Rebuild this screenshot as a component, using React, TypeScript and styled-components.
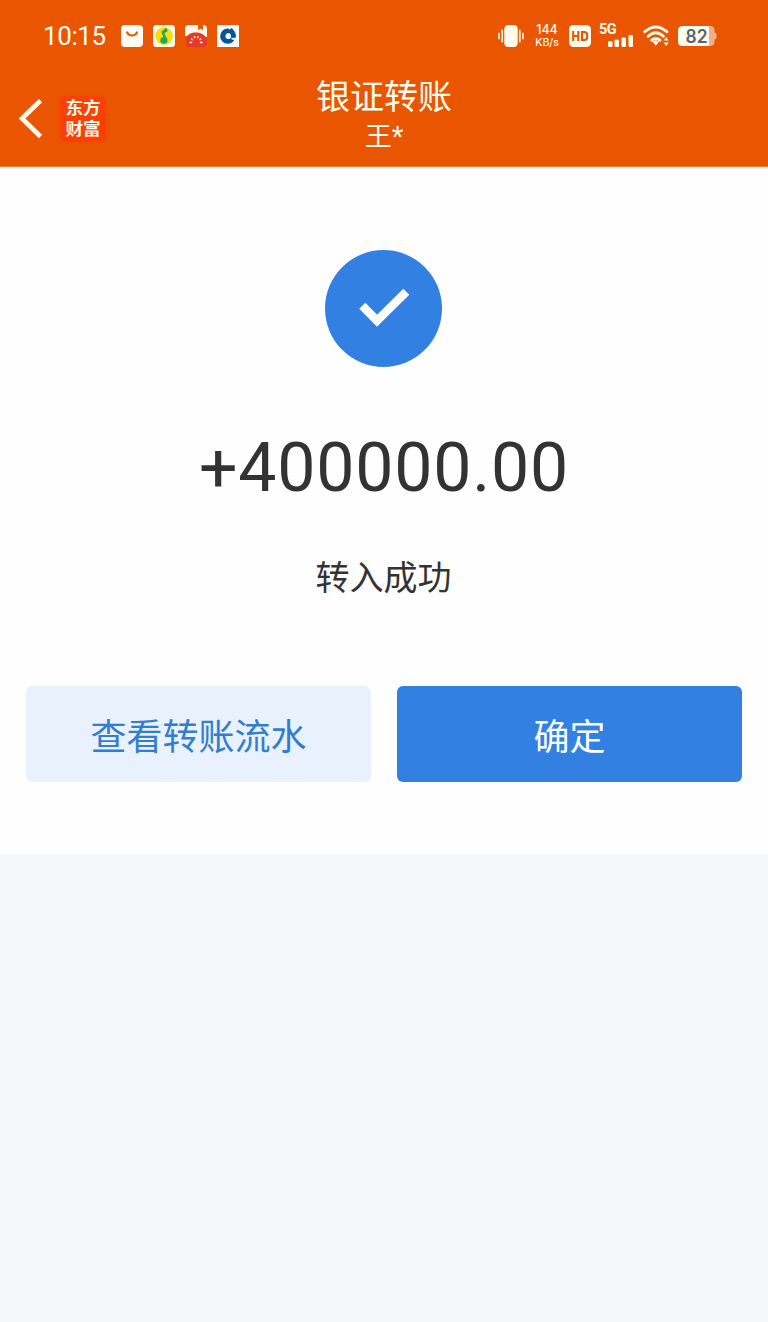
import React from 'react';
import styled, { createGlobalStyle } from 'styled-components';

const GlobalStyle = createGlobalStyle`
  * { box-sizing: border-box; }
  body {
    margin: 0;
    background: #f5f7f9;
    font-family: Roboto, "Noto Sans CJK SC", sans-serif;
  }
`;

const Page = styled.div`
  min-height: 1322px;
  background: #f5f7fa;
`;

const Header = styled.header`
  height: 167px;
  background: #e95500;
  border-bottom: 1px solid #ed7838;
  color: #fffdf0;
`;

const StatusBar = styled.div`
  display: flex;
  align-items: center;
  justify-content: space-between;
  height: 72px;
  padding: 0 51px 0 43px;
`;

const StatusGroup = styled.div<{ $gap: number }>`
  display: flex;
  align-items: center;
  gap: ${(p) => p.$gap}px;
`;

const Clock = styled.span`
  width: 68px;
  font-size: 26px;
  line-height: 32px;
  letter-spacing: -0.4px;
`;

const Speed = styled.div`
  width: 26px;
  margin: 0 9px;
  font-family: Inter, sans-serif;
  font-size: 10.5px;
  font-weight: 500;
  line-height: 13px;
  text-align: center;
  white-space: nowrap;
`;

const SpeedValue = styled.div`
  font-size: 12.5px;
  line-height: 12px;
`;

const Icon = styled.svg<{ $right?: number }>`
  display: block;
  flex: none;
  margin-right: ${(p) => p.$right ?? 0}px;
`;

const NavBar = styled.nav`
  display: grid;
  grid-template-columns: 200px 1fr 200px;
  height: 94px;
`;

const NavLeft = styled.div`
  display: flex;
  align-items: center;
  padding-left: 18px;
  gap: 16px;
`;

const Brand = styled.div`
  display: flex;
  flex-direction: column;
  align-items: center;
  justify-content: center;
  width: 46px;
  height: 46px;
  border-radius: 6px;
  background: #fc4003;
  box-shadow: 0 0 3px #f54a02;
  color: #fff4e8;
  font-size: 17.6px;
  font-weight: 700;
  line-height: 21px;
  white-space: nowrap;
`;

const TitleBlock = styled.div`
  display: flex;
  flex-direction: column;
  align-items: center;
  padding-top: 2px;
`;

const Title = styled.h1`
  margin: 0;
  font-size: 34px;
  font-weight: 400;
  line-height: 46px;
`;

const Subtitle = styled.div`
  font-size: 27px;
  line-height: 35px;
`;

const Result = styled.main`
  display: flex;
  flex-direction: column;
  align-items: center;
  height: 687px;
  padding: 83px 26px 0;
  background: #fefefe;
  color: #333;
`;

const Amount = styled.div`
  margin-top: 61px;
  font-size: 68px;
  line-height: 80px;
  letter-spacing: 0.8px;
`;

const Message = styled.div`
  margin-top: 45px;
  padding-right: 1px;
  font-size: 34px;
  line-height: 50px;
`;

const Actions = styled.div`
  display: grid;
  grid-template-columns: 1fr 1fr;
  gap: 26px;
  width: 100%;
  margin-top: 83px;
`;

const Button = styled.button<{ $primary?: boolean }>`
  height: 96px;
  padding: 0 0 1px;
  border: 0;
  border-radius: 6px;
  background: ${(p) => (p.$primary ? '#3281e2' : '#e9f2fc')};
  color: ${(p) => (p.$primary ? '#fafffe' : '#337dd0')};
  font-family: inherit;
  font-size: 36px;
`;

const BagIcon = () => (
  <Icon width="22" height="22" viewBox="0 0 22 22">
    <rect width="22" height="22" rx="4" fill="#fffdf4" />
    <path d="M6 7.3c2.2 4.3 8 4.3 10 0" fill="none" stroke="#e95500" strokeWidth="2" strokeLinecap="round" />
  </Icon>
);

const MusicIcon = () => (
  <Icon width="22" height="22" viewBox="0 0 22 22">
    <rect width="22" height="22" rx="3.5" fill="#fffde9" />
    <circle cx="11" cy="11" r="8.8" fill="#f9dc13" />
    <path d="M8.3 6.5Q11 5.8 12.8 2.6L14.8 5.8Q13.5 7.6 11.2 8l3 7h-2z" fill="#21a855" />
    <path d="M9.5 7l3.5 8" stroke="#21a855" strokeWidth="2" />
    <ellipse cx="10.9" cy="15.4" rx="3.6" ry="3.3" fill="#21a855" />
  </Icon>
);

const TomatoIcon = () => (
  <Icon width="22" height="22" viewBox="0 0 22 22">
    <path d="M0 11V4q0-4 4-4h9v5l2.5-1.5L18 5V0q4 0 4 4v8z" fill="#fff8ed" />
    <path d="M1 13C3 9 6 7.5 11 7.5S20 10 22 14v4q0 4-4 4H4q-3 0-3-4z" fill="#e43b24" />
    <path d="M5 17.500h1.500M15.500 17.500H17M6.500 14l.8.600M15.700 14l-.8.600M9.500 11.800l.2.800M12.800 11.800l-.2.800" stroke="#fff2de" strokeWidth="1.500" strokeLinecap="round" />
  </Icon>
);

const BankIcon = () => (
  <Icon width="22" height="22" viewBox="0 0 22 22">
    <rect width="22" height="22" fill="#f7fbf8" />
    <circle cx="10.8" cy="11.2" r="7.600" fill="#07549b" />
    <path d="M11.500 3.200h7.500v3.500h-5z" fill="#f7fbf8" />
    <path d="M12 5l2.800-2 3.800 4.800h-5z" fill="#07549b" />
    <path d="M14 12.800h8v2H15z" fill="#f7fbf8" />
    <path d="M13.500 8.500h5.300v4h-5.300z" fill="#07549b" />
    <path d="M8.600 9.800l1.500-1.500h2.500l1.300 1.500v2.800l-1.300 1.300h-2.500l-1.500-1.500z" fill="#f7fbf8" />
  </Icon>
);

const VibrateIcon = () => (
  <Icon width="26" height="22" viewBox="0 0 26 22" $right={1}>
    <rect x="6.3" y="0" width="13.4" height="22" rx="4" fill="#fffbed" />
    <path d="M1 8.5v5M4.2 5.5v11M21.8 5.5v11M25 8.5v5" stroke="#fff0d8" strokeWidth="1.8" strokeLinecap="round" />
  </Icon>
);

const HdIcon = () => (
  <Icon width="22" height="22" viewBox="0 0 22 22" $right={8}>
    <rect width="22" height="22" rx="4.5" fill="#fffced" />
    <path d="M4.2 6v10M9.3 6v10M4.2 11h5.1M13 7h2.3q2.8 0 2.8 2.7v2.6q0 2.7-2.8 2.7H13z" fill="none" stroke="#e95500" strokeWidth="2.1" />
  </Icon>
);

const SignalWrap = styled.div`
  position: relative;
  width: 36px;
  height: 24px;
  margin-right: 8px;
`;

const NetworkLabel = styled.span`
  position: absolute;
  left: 0;
  top: -3px;
  font-family: Roboto, sans-serif;
  font-size: 14.5px;
  font-weight: 700;
  line-height: 18px;
  letter-spacing: -0.6px;
`;

const SignalIcon = () => (
  <SignalWrap>
    <Icon width="36" height="24" viewBox="0 0 36 24">
      <g fill="#fffced">
        <rect x="9" y="17" width="4.5" height="6" rx="1.3" />
        <rect x="15.500" y="15.500" width="4.500" height="7.500" rx="1.300" />
        <rect x="22.500" y="13.500" width="4.500" height="9.500" rx="1.300" />
        <rect x="29.500" y="11" width="4.500" height="12" rx="1.300" />
      </g>
    </Icon>
    <NetworkLabel>5G</NetworkLabel>
  </SignalWrap>
);

const WifiIcon = () => (
  <Icon width="27" height="22" viewBox="0 0 27 22" $right={8}>
    <g fill="none" stroke="#fff6e4" strokeWidth="2.9" strokeLinecap="round">
      <path d="M1.8 6.7q11-9.5 22 0" />
      <path d="M5.2 11.2q7.6-7 15.2 0" />
      <path d="M8.6 15.2q4.2-3.6 8.400 0" />
    </g>
    <path d="M9.300 16.300q3.500-2 7 0L12.800 20.800z" fill="#fff6e4" />
    <path d="M20.500 15.600l2.600-3.600 2.600 3.600zM20.500 17.400h5.200L23.100 21z" fill="#fff6e4" />
  </Icon>
);

const BatteryIcon = () => (
  <Icon width="39" height="20" viewBox="0 0 39 20">
    <path d="M30 0h2q4.500 0 4.500 4.500V6.500q2.200 0 2.200 3.500t-2.200 3.500v2Q36.500 20 32 20h-2z" fill="#f5ad87" />
    <path d="M4.500 0H31v20H4.500Q0 20 0 15.500v-11Q0 0 4.500 0z" fill="#fffcf0" />
    <text x="18.500" y="16.500" textAnchor="middle" fill="#596570" fontFamily="Inter, sans-serif" fontSize="18" fontWeight="600" textLength="22" lengthAdjust="spacingAndGlyphs">82</text>
  </Icon>
);

const BackIcon = () => (
  <Icon width="26" height="42" viewBox="0 0 26 42">
    <path d="M22.500 2.500L4 20.500 22.500 38.500" fill="none" stroke="#fffdf0" strokeWidth="4.700" />
  </Icon>
);

const SuccessIcon = () => (
  <Icon width="117" height="117" viewBox="0 0 117 117" $right={2}>
    <circle cx="58.500" cy="58.500" r="58.500" fill="#3281e2" />
    <path d="M37.300 55.800L52 70.800 81.300 41.800" fill="none" stroke="#fefefe" strokeWidth="8.500" />
  </Icon>
);

export default function App() {
  return (
    <Page>
      <GlobalStyle />
      <Header>
        <StatusBar>
          <StatusGroup $gap={10}>
            <Clock>10:15</Clock>
            <BagIcon />
            <MusicIcon />
            <TomatoIcon />
            <BankIcon />
          </StatusGroup>
          <StatusGroup $gap={0}>
            <VibrateIcon />
            <Speed>
              <SpeedValue>144</SpeedValue>
              KB/s
            </Speed>
            <HdIcon />
            <SignalIcon />
            <WifiIcon />
            <BatteryIcon />
          </StatusGroup>
        </StatusBar>
        <NavBar>
          <NavLeft>
            <BackIcon />
            <Brand>
              <span>东方</span>
              <span>财富</span>
            </Brand>
          </NavLeft>
          <TitleBlock>
            <Title>银证转账</Title>
            <Subtitle>王*</Subtitle>
          </TitleBlock>
        </NavBar>
      </Header>
      <Result>
        <SuccessIcon />
        <Amount>+400000.00</Amount>
        <Message>转入成功</Message>
        <Actions>
          <Button>查看转账流水</Button>
          <Button $primary>确定</Button>
        </Actions>
      </Result>
    </Page>
  );
}
